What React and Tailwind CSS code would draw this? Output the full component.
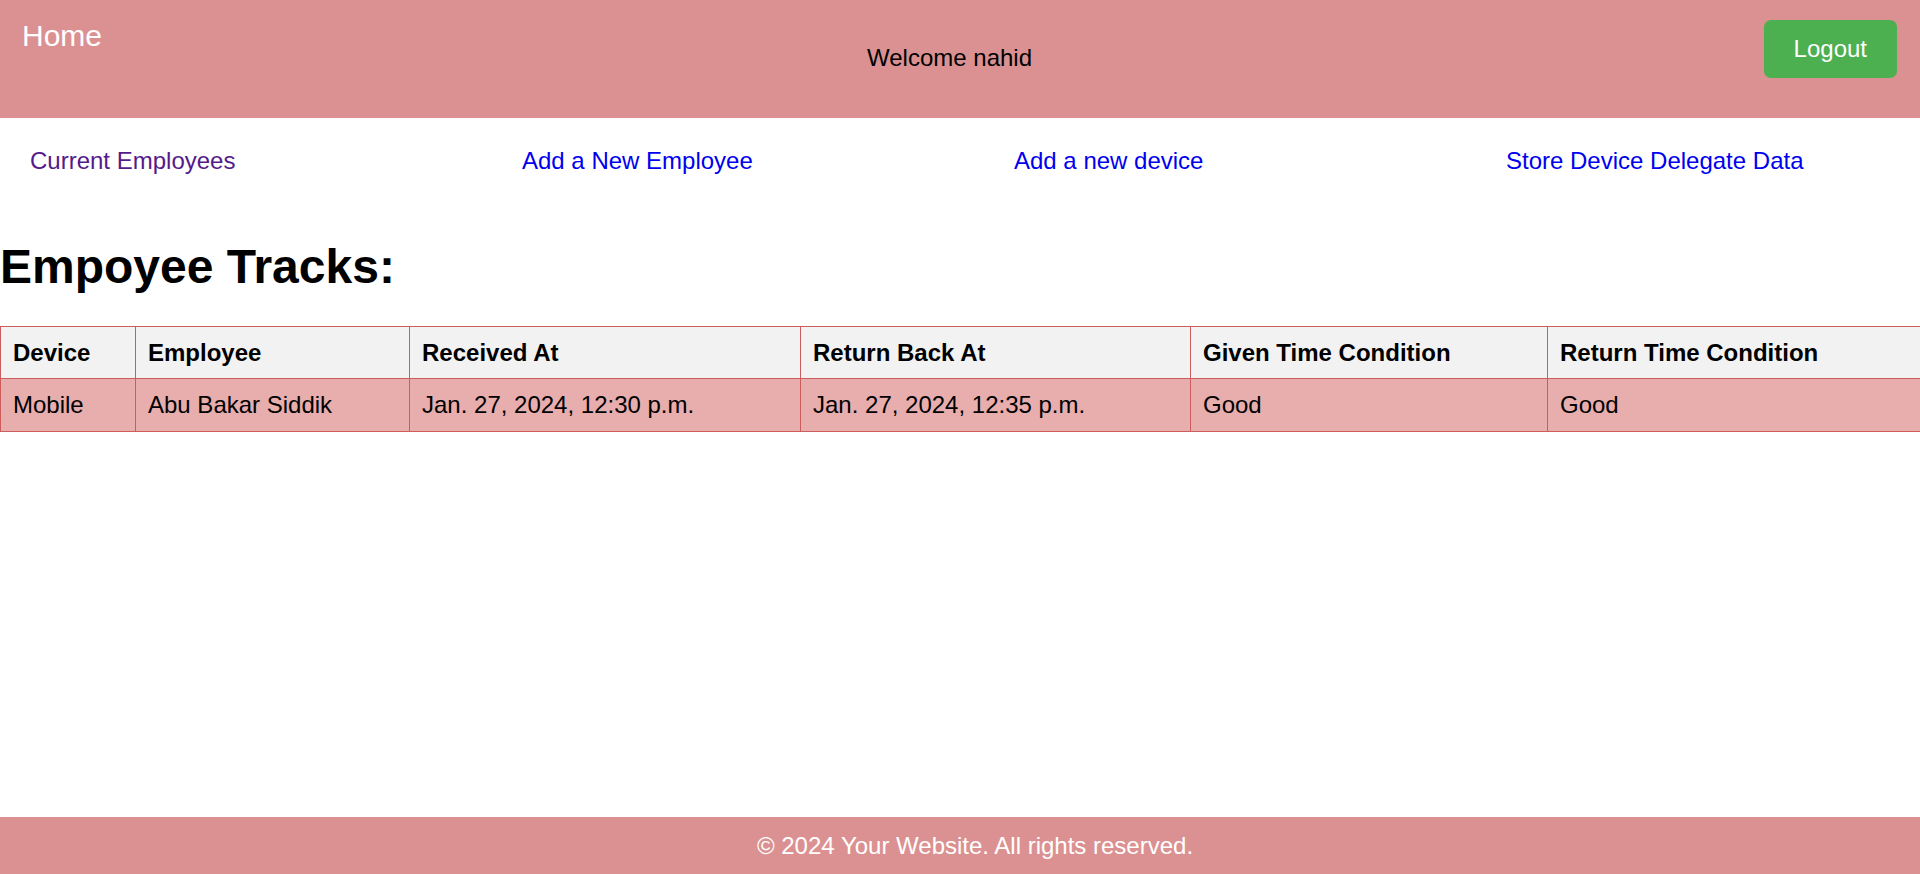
export default function App() {
  const font = { fontFamily: '"Liberation Sans", Arial, sans-serif' };
  const cols = [
    { w: "w-[135px]", h: "Device", d: "Mobile" },
    { w: "w-[274px]", h: "Employee", d: "Abu Bakar Siddik" },
    { w: "w-[391px]", h: "Received At", d: "Jan. 27, 2024, 12:30 p.m." },
    { w: "w-[390px]", h: "Return Back At", d: "Jan. 27, 2024, 12:35 p.m." },
    { w: "w-[357px]", h: "Given Time Condition", d: "Good" },
    { w: "w-[373px]", h: "Return Time Condition", d: "Good" },
  ];
  return (
    <div
      className="flex min-h-screen flex-col overflow-hidden bg-white font-['Liberation_Sans',Arial,sans-serif] text-black"
      style={font}
    >
      <header className="flex h-[118px] shrink-0 items-start bg-[#db9191]">
        <a className="ml-[22px] mt-[19px] text-[30px] leading-[34.5px] text-white" href="#">
          Home
        </a>
        <div className="ml-[765px] mt-[44px] text-[24px] leading-[27.6px] text-black">Welcome nahid</div>
        <button className="ml-auto mr-[23px] mt-[20px] rounded-[7px] bg-[#4caf50] px-[30px] py-[15px] text-[24px] leading-[27.6px] text-white">
          Logout
        </button>
      </header>

      <nav className="grid grid-cols-[492px_492px_492px_1fr] pl-[30px] pt-[29px] text-[24px] leading-[27.6px]">
        <a className="justify-self-start text-[#551a8b]" href="#">Current Employees</a>
        <a className="justify-self-start text-[#0000ee]" href="#">Add a New Employee</a>
        <a className="justify-self-start text-[#0000ee]" href="#">Add a new device</a>
        <a className="justify-self-start text-[#0000ee]" href="#">Store Device Delegate Data</a>
      </nav>

      <main className="flex-1">
        <h1 className="mt-[64px] mb-[32px] text-[48px] font-bold leading-[55px]">Empoyee Tracks:</h1>
        <table className="w-full table-fixed border-collapse text-[24px] leading-[27.6px]">
          <colgroup>
            {cols.map((c, i) => (
              <col key={i} className={c.w} />
            ))}
          </colgroup>
          <thead>
            <tr className="bg-[#f2f2f2]">
              {cols.map((c, i) => (
                <th key={i} className="border border-[#cd5c5c] px-3 py-3 text-left font-bold">
                  {c.h}
                </th>
              ))}
            </tr>
          </thead>
          <tbody>
            <tr className="bg-[#e8adad]">
              {cols.map((c, i) => (
                <td key={i} className="border border-[#cd5c5c] px-3 py-3 text-left">
                  {c.d}
                </td>
              ))}
            </tr>
          </tbody>
        </table>
      </main>

      <footer className="h-[57px] shrink-0 bg-[#db9191] py-[15px] pl-[30px] text-center text-[24px] leading-[27.6px] text-white">
        © 2024 Your Website. All rights reserved.
      </footer>
    </div>
  );
}
